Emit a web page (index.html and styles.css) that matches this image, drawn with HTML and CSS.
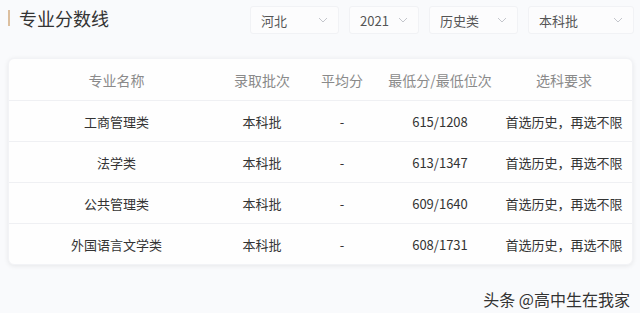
FILE: index.html
```html
<!DOCTYPE html>
<html lang="zh">
<head>
<meta charset="utf-8">
<link rel="stylesheet" href="styles.css">
</head>
<body>
<div class="page">
  <div class="topbar">
    <h1 class="title">专业分数线</h1>
    <div class="filters">
      <div class="select w1"><span>河北</span><svg class="chev" viewBox="0 0 10 6"><path d="M1 1 L5 5 L9 1" fill="none" stroke="currentColor" stroke-width="1"/></svg></div>
      <div class="select w2"><span>2021</span><svg class="chev" viewBox="0 0 10 6"><path d="M1 1 L5 5 L9 1" fill="none" stroke="currentColor" stroke-width="1"/></svg></div>
      <div class="select w1"><span>历史类</span><svg class="chev" viewBox="0 0 10 6"><path d="M1 1 L5 5 L9 1" fill="none" stroke="currentColor" stroke-width="1"/></svg></div>
      <div class="select w3"><span>本科批</span><svg class="chev" viewBox="0 0 10 6"><path d="M1 1 L5 5 L9 1" fill="none" stroke="currentColor" stroke-width="1"/></svg></div>
    </div>
  </div>
  <div class="card">
    <div class="row head">
      <div>专业名称</div><div>录取批次</div><div>平均分</div><div>最低分/最低位次</div><div>选科要求</div>
    </div>
    <div class="row">
      <div>工商管理类</div><div>本科批</div><div>-</div><div>615/1208</div><div>首选历史，再选不限</div>
    </div>
    <div class="row">
      <div>法学类</div><div>本科批</div><div>-</div><div>613/1347</div><div>首选历史，再选不限</div>
    </div>
    <div class="row">
      <div>公共管理类</div><div>本科批</div><div>-</div><div>609/1640</div><div>首选历史，再选不限</div>
    </div>
    <div class="row last">
      <div>外国语言文学类</div><div>本科批</div><div>-</div><div>608/1731</div><div>首选历史，再选不限</div>
    </div>
  </div>
  <div class="footer"><span class="mark">头条 @高中生在我家</span></div>
</div>
</body>
</html>
```

FILE: styles.css
```css
* { box-sizing: border-box; }
html, body {
  margin: 0;
  padding: 0;
  background: #f9fafc;
  font-family: "Noto Sans CJK SC", "Noto Sans", sans-serif;
  color: #333;
}
.page {
  width: 640px;
  height: 313px;
  overflow: hidden;
}
.topbar {
  display: flex;
  align-items: center;
  justify-content: space-between;
  height: 40px;
  padding: 0 6px 0 8px;
}
.title {
  margin: 0 0 4px 0;
  font-size: 18px;
  font-weight: 400;
  line-height: 16px;
  color: #333;
  border-left: 2px solid #dcbf9f;
  padding-left: 9px;
}
.filters {
  display: flex;
  gap: 10px;
}
.select {
  height: 28px;
  display: flex;
  align-items: center;
  justify-content: space-between;
  padding: 0 10px 0 10px;
  background: #fcfcfd;
  border: 1px solid #f1f2f5;
  border-radius: 3px;
  font-size: 13px;
  color: #555;
}
.select.w1 { width: 89px; }
.select.w2 { width: 70px; }
.select.w3 { width: 106px; }
.chev {
  width: 10px;
  height: 6px;
  color: #c4c6cc;
}
.card {
  margin: 18px 7px 0 8px;
  background: #fefefe;
  border-radius: 6px;
  box-shadow: 0 1px 5px rgba(0, 0, 0, 0.08);
  border: 1px solid #f2f3f6;
}
.row {
  display: grid;
  grid-template-columns: 215px 76px 84px 112px 1fr;
  height: 41px;
  align-items: center;
  text-align: center;
  font-size: 13px;
  color: #333;
  border-bottom: 1px solid #eff0f3;
}
.row.head {
  height: 42px;
  font-size: 14px;
  color: #8a8a8a;
}
.row.last {
  border-bottom: none;
  height: 40px;
}
.footer {
  display: flex;
  justify-content: flex-end;
  padding: 22px 10px 0 0;
}
.mark {
  font-size: 16px;
  color: #333;
  text-shadow: 0 0 2px #fff;
}
```
